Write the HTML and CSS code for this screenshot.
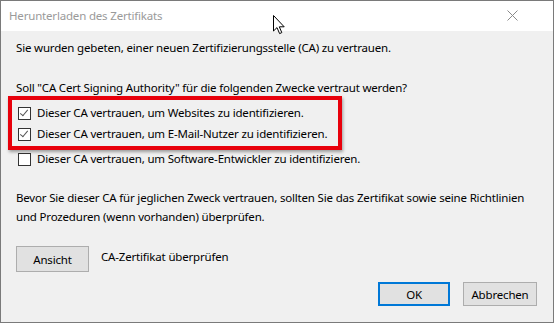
FILE: index.html
```html
<!DOCTYPE html>
<html>
<head>
    <title>Herunterladen des Zertifikats</title>
    <link rel="stylesheet" href="styles.css">
</head>
<body>
    <div class="dialog">
        <div class="titlebar">
            <span class="title">Herunterladen des Zertifikats</span>
            <svg class="close" width="11" height="11" viewBox="0 0 11 11">
                <path d="M0.5 0.5 L10.5 10.5 M10.5 0.5 L0.5 10.5" stroke="#8a8a8a" stroke-width="1" fill="none"/>
            </svg>
        </div>
        <div class="content">
            <p class="intro">Sie wurden gebeten, einer neuen Zertifizierungsstelle (CA) zu vertrauen.</p>
            <p class="question">Soll "CA Cert Signing Authority" für die folgenden Zwecke vertraut werden?</p>

            <label class="option first">
                <span class="box checked"></span>
                Dieser CA vertrauen, um Websites zu identifizieren.
            </label>
            <label class="option">
                <span class="box checked"></span>
                Dieser CA vertrauen, um E-Mail-Nutzer zu identifizieren.
            </label>
            <label class="option third">
                <span class="box"></span>
                Dieser CA vertrauen, um Software-Entwickler zu identifizieren.
            </label>

            <p class="warning">Bevor Sie dieser CA für jeglichen Zweck vertrauen, sollten Sie das Zertifikat sowie seine Richtlinien und Prozeduren (wenn vorhanden) überprüfen.</p>

            <div class="view-row">
                <button class="btn view">Ansicht</button>
                <span class="view-label">CA-Zertifikat überprüfen</span>
            </div>

            <div class="actions">
                <button class="btn default">OK</button>
                <button class="btn">Abbrechen</button>
            </div>
        </div>

        <!-- annotation over the first two options -->
        <div class="highlight"></div>

        <svg class="cursor" width="13" height="20" viewBox="0 0 13 20">
            <path d="M0.5 0.5 L0.5 16 L4 12.6 L6.6 18.6 L8.8 17.6 L6.3 11.8 L11.2 11.8 Z" fill="#fff" stroke="#000" stroke-width="1" stroke-linejoin="miter"/>
        </svg>
    </div>
</body>
</html>
```

FILE: styles.css
```css
body {
    margin: 0;
    font-family: "Noto Sans", "Open Sans", sans-serif;
    font-size: 11.5px;
    letter-spacing: -0.18px;
    color: #000;
}
.dialog {
    position: relative;
    width: 552px;
    height: 321px;
    border: 1px solid #7a7a7a;
    background: #f0f0f0;
}
.titlebar {
    height: 30px;
    background: #fff;
    display: flex;
    align-items: center;
    justify-content: space-between;
    padding: 0 35px 0 8px;
}
.title {
    color: #9a9a9a;
    margin-top: -1px;
}
.close {
    margin-top: -1px;
}
.content {
    padding: 9px 15px 0 15px;
}
p {
    margin: 0;
    line-height: 16px;
}
.intro {
    margin-bottom: 24px;
}
.question {
    margin-bottom: 9px;
}
.option {
    display: flex;
    align-items: center;
    height: 16px;
    line-height: 16px;
    margin-top: 5px;
    padding-left: 2px;
}
.option.first {
    margin-top: 0;
}
.option.third {
    margin-top: 9px;
}
.box {
    width: 11px;
    height: 11px;
    border: 1px solid #333;
    background: #fff;
    margin-right: 6px;
    position: relative;
    flex-shrink: 0;
}
.box.checked::after {
    content: "";
    position: absolute;
    left: 3px;
    top: 0px;
    width: 3px;
    height: 7px;
    border: solid #555;
    border-width: 0 1px 1px 0;
    transform: rotate(40deg);
}
.warning {
    margin-top: 21px;
    line-height: 19px;
}
.view-row {
    display: flex;
    align-items: center;
    margin-top: 20px;
}
.view-label {
    margin-left: 12px;
    margin-top: -5px;
}
.btn {
    font-family: inherit;
    font-size: 11.5px;
    letter-spacing: -0.18px;
    color: #000;
    background: #e1e1e1;
    border: 1px solid #adadad;
    padding: 0;
    height: 24px;
    width: 74px;
}
.btn.view {
    width: 73px;
    height: 26px;
}
.btn.default {
    border: 2px solid #0078d7;
    width: 72px;
}
.actions {
    display: flex;
    justify-content: flex-end;
    gap: 13px;
    margin-top: 10px;
    padding-right: 1px;
}
.highlight {
    position: absolute;
    left: 7px;
    top: 95px;
    width: 326px;
    height: 46px;
    border: 4px solid #e8000b;
    box-shadow: 1px 2px 3px rgba(0, 0, 0, 0.35);
}
.cursor {
    position: absolute;
    left: 272px;
    top: 14px;
}
```
